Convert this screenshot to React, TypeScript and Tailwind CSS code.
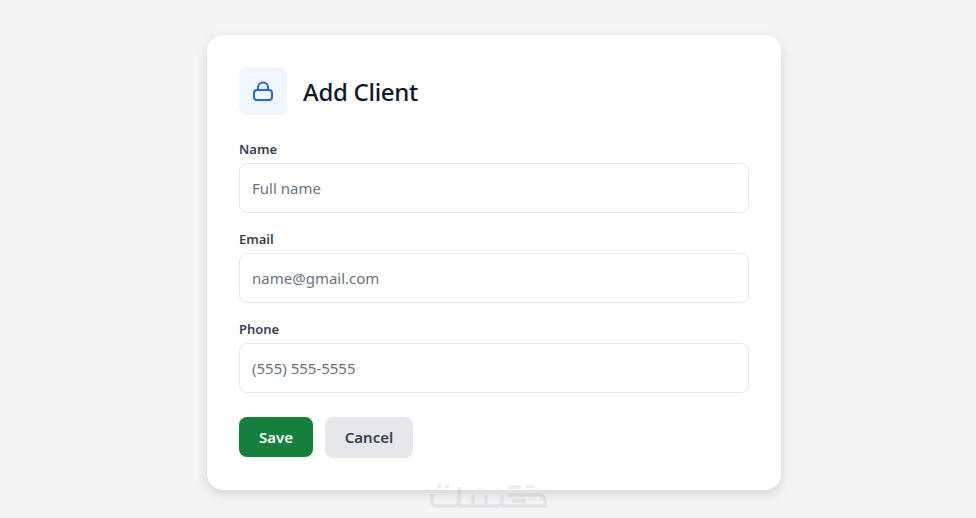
const font = { fontFamily: '"Noto Sans", sans-serif' };

const Field = ({ label, placeholder }: { label: string; placeholder: string }) => (
  <div className="mb-[17px]">
    <label className="block mb-[5px] text-[13px] leading-[18px] font-semibold text-[#374151]">
      {label}
    </label>
    <input
      placeholder={placeholder}
      className="block w-full h-[50px] px-3 text-[15px] text-[#111827] bg-white border border-[#e5e7eb] rounded-lg outline-none placeholder:text-[#6b7280]"
    />
  </div>
);

// watermark in the bottom center, it is a logo so it is drawn
const Watermark = () => (
  <svg
    className="absolute left-[430px] top-[483px] pointer-events-none"
    width="117"
    height="25"
    viewBox="0 0 117 25"
    fill="none"
    stroke="#9ca3af"
    strokeOpacity="0.2"
    strokeWidth="3.5"
  >
    <path d="M2 11v7q0 5 5 5h18q4 0 4-5V4" />
    <path d="M7 3.5h4M15 3.5h4" />
    <path d="M29 23h39q4 0 4-5v-6M43 12v11M56 12v11" />
    <path d="M72 23h43v-4q0-7-7-7H78" />
    <path d="M78 4h13M82 18h14" />
    <path d="M96 3.5h8" />
  </svg>
);

const LockIcon = () => (
  <svg width="24" height="24" viewBox="0 0 24 24" fill="none" stroke="#2563eb" strokeWidth="2">
    <rect x="3" y="11" width="18" height="10" rx="3" />
    <path d="M7 11V8.5a5 5 0 0 1 10 0V11" />
  </svg>
);

export default function App() {
  return (
    <div style={font} className="relative h-[518px] bg-[#f3f4f6] overflow-hidden">
      <div className="pl-[207px] pt-[35px]">
        <div className="w-[574px] h-[455px] bg-white rounded-2xl px-8 pt-8 shadow-[0_4px_12px_rgba(0,0,0,0.13)]">
          <div className="flex items-start gap-4 mb-[23px]">
            <div className="flex items-center justify-center w-12 h-12 rounded-lg bg-[#eff6ff]">
              <LockIcon />
            </div>
            <h1 className="text-[24px] leading-[50px] font-medium tracking-[-0.3px] text-[#111827]">
              Add Client
            </h1>
          </div>
          <Field label="Name" placeholder="Full name" />
          <Field label="Email" placeholder="name@gmail.com" />
          <Field label="Phone" placeholder="(555) 555-5555" />
          <div className="flex items-start gap-3 mt-[24px]">
            <button className="h-10 w-[74px] rounded-lg bg-[#15803d] text-white text-[15px] font-semibold">
              Save
            </button>
            <button className="h-[41px] w-[88px] rounded-lg bg-[#e5e7eb] border border-[#e5e7eb] text-[#374151] text-[15px] font-semibold">
              Cancel
            </button>
          </div>
        </div>
      </div>
      <Watermark />
    </div>
  );
}
